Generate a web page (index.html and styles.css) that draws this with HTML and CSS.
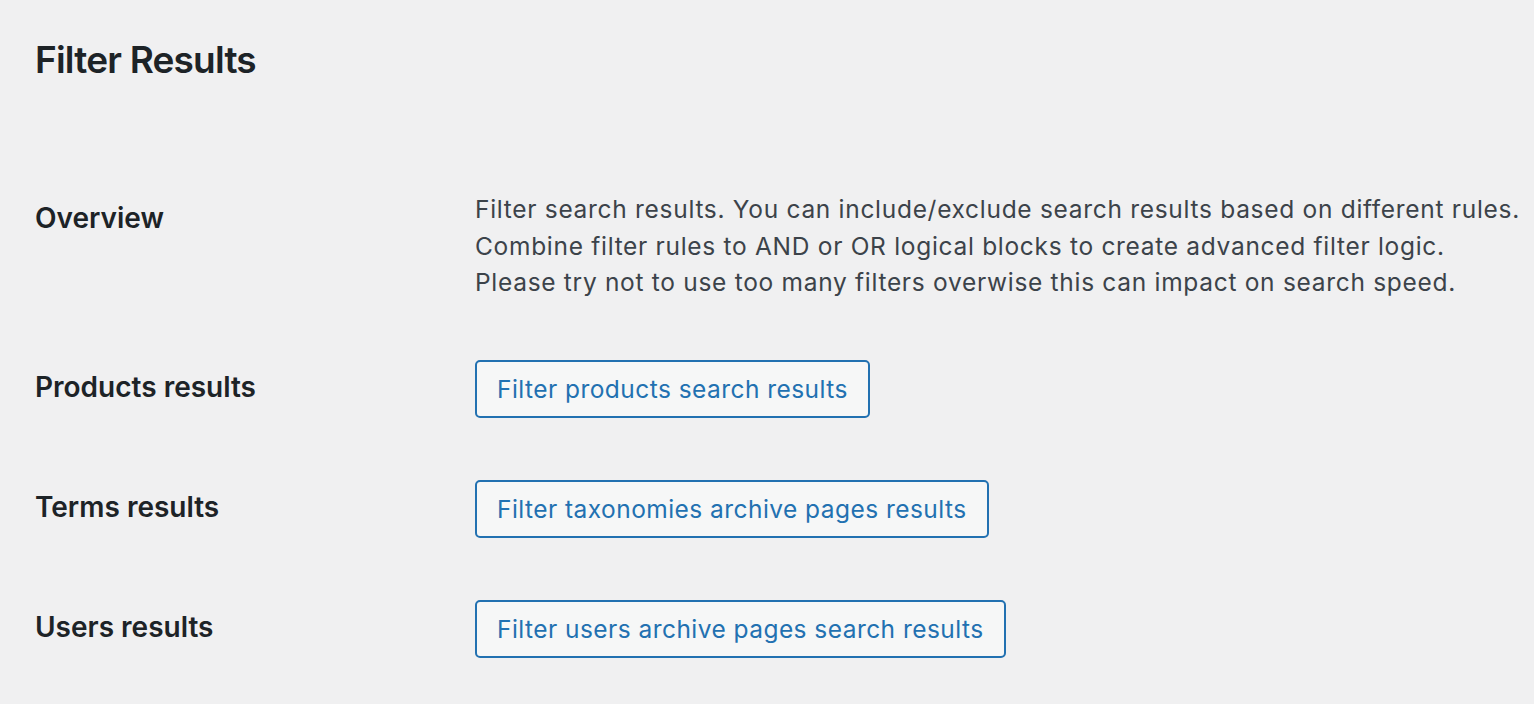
FILE: index.html
```html
<!DOCTYPE html>
<html lang="en">
<head>
<meta charset="utf-8">
<title>Filter Results</title>
<link rel="stylesheet" href="styles.css">
</head>
<body>
<div class="wrap">
  <h1 class="title">Filter Results</h1>
  <div class="form">
    <div class="row row-overview">
      <div class="label">Overview</div>
      <div class="field">
        <p class="desc">Filter search results. You can include/exclude search results based on different rules.<br>Combine filter rules to AND or OR logical blocks to create advanced filter logic.<br>Please try not to use too many filters overwise this can impact on search speed.</p>
      </div>
    </div>
    <div class="row">
      <div class="label">Products results</div>
      <div class="field"><button class="button" type="button">Filter products search results</button></div>
    </div>
    <div class="row">
      <div class="label">Terms results</div>
      <div class="field"><button class="button" type="button">Filter taxonomies archive pages results</button></div>
    </div>
    <div class="row">
      <div class="label">Users results</div>
      <div class="field"><button class="button" type="button">Filter users archive pages search results</button></div>
    </div>
  </div>
</div>
</body>
</html>
```
FILE: styles.css
```css
html, body {
  margin: 0;
  padding: 0;
  background: #f0f0f1;
}
body {
  font-family: Inter, "Noto Sans", sans-serif;
  color: #3c434a;
  width: 1534px;
  height: 704px;
  overflow: hidden;
}
.wrap {
  padding: 35px 35px 0 35px;
}
.title {
  margin: 0;
  font-size: 37px;
  line-height: 50px;
  font-weight: 600;
  letter-spacing: -0.8px;
  color: #1d2327;
}
.form {
  margin-top: 106px;
}
.row {
  display: grid;
  grid-template-columns: 440px 1fr;
  align-items: center;
  height: 120px;
}
.row-overview {
  align-items: start;
  height: auto;
  padding-bottom: 28px;
}
.label {
  font-size: 28px;
  font-weight: 600;
  color: #1d2327;
  line-height: 36px;
  margin-bottom: 4px;
}
.row-overview .label {
  padding-top: 9px;
  margin-bottom: 0;
}
.desc {
  margin: 0;
  font-size: 24.5px;
  line-height: 36.5px;
  letter-spacing: 0.7px;
  white-space: nowrap;
  color: #3c434a;
}
.button {
  font-family: inherit;
  font-size: 24.5px;
  letter-spacing: 0.45px;
  line-height: 54px;
  height: 58px;
  padding: 0 20px;
  border: 2px solid #2271b1;
  border-radius: 5px;
  background: #f6f7f7;
  color: #2271b1;
  cursor: pointer;
}
```
